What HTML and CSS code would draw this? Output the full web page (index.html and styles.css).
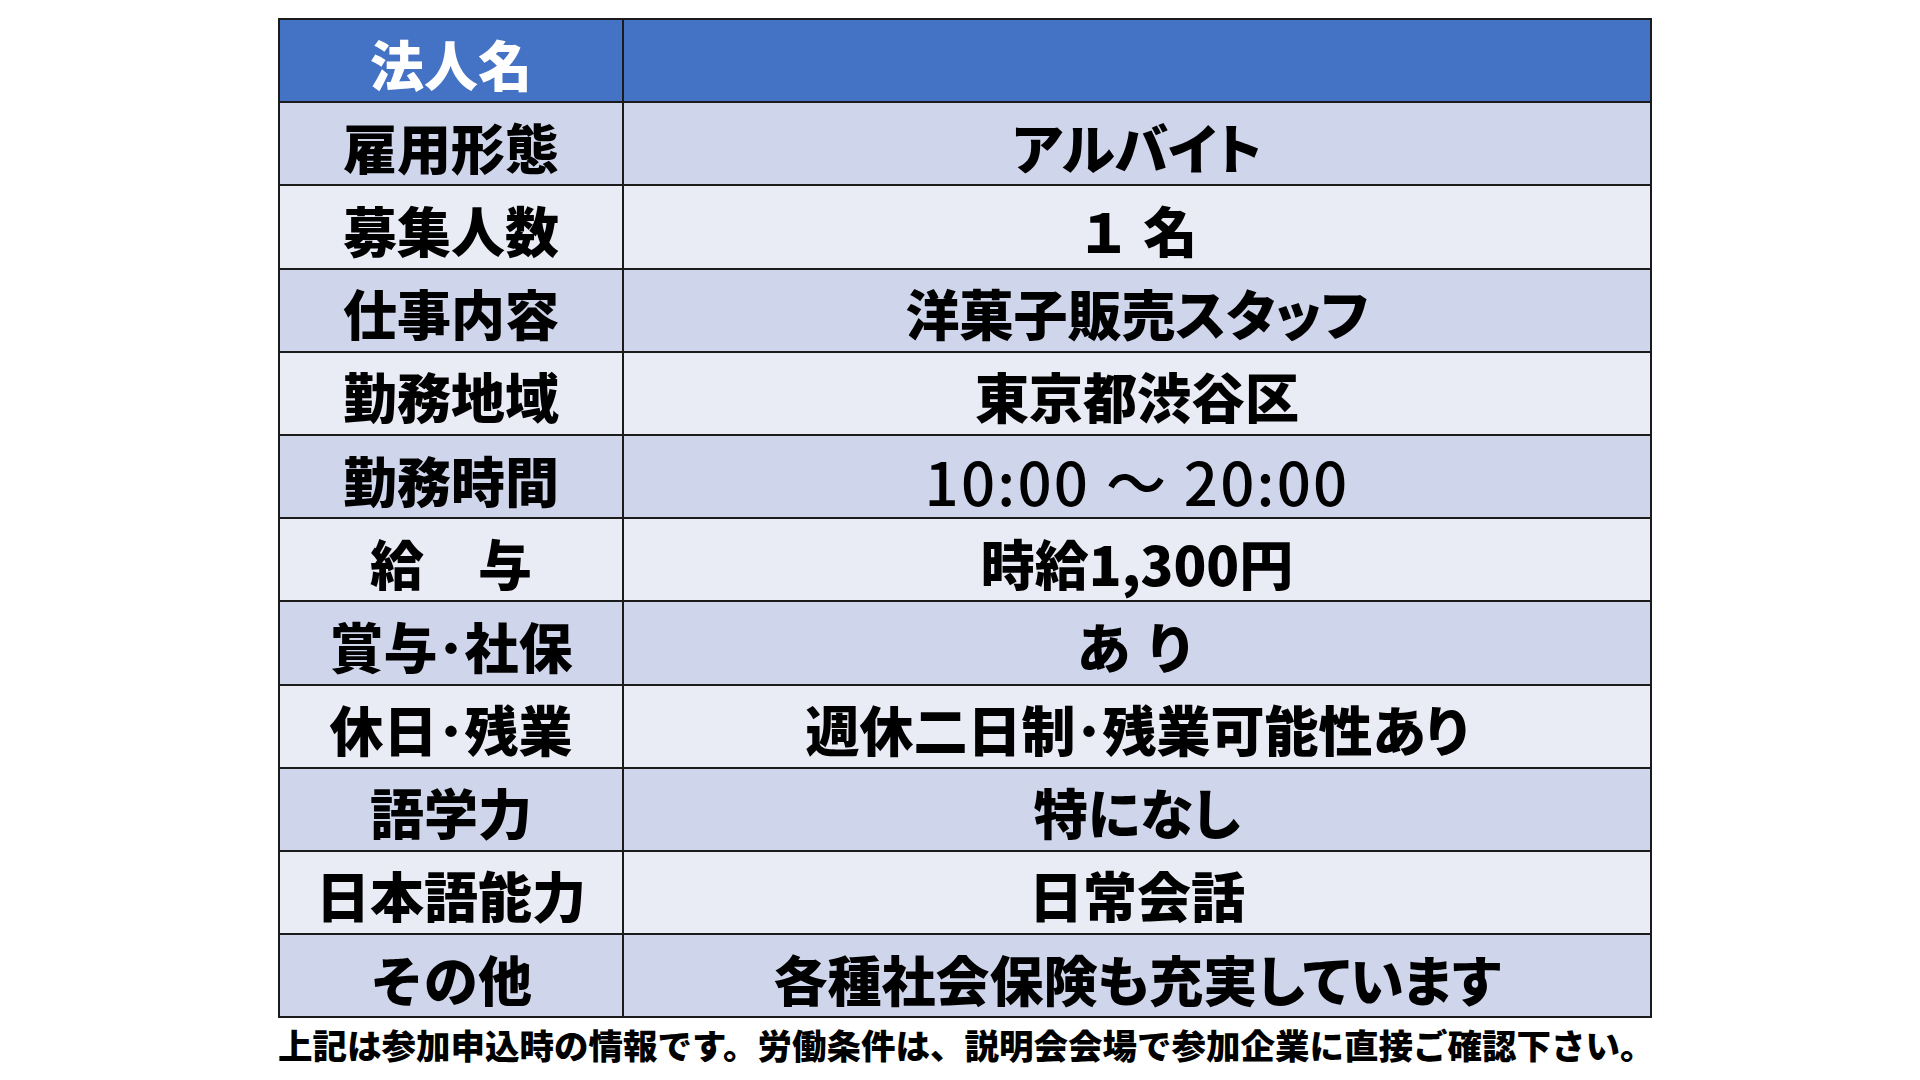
FILE: index.html
```html
<!DOCTYPE html>
<html lang="ja">
<head>
<meta charset="utf-8">
<title>求人情報</title>
<link rel="stylesheet" href="styles.css">
</head>
<body>
<main class="page">
  <table class="job">
    <colgroup><col class="c-label"><col class="c-value"></colgroup>
    <tr class="head"><th>法人名</th><td></td></tr>
    <tr class="odd"><th>雇用形態</th><td class="kana">アルバイト</td></tr>
    <tr class="even"><th>募集人数</th><td>１ 名</td></tr>
    <tr class="odd"><th>仕事内容</th><td class="kana">洋菓子販売スタッフ</td></tr>
    <tr class="even"><th>勤務地域</th><td>東京都渋谷区</td></tr>
    <tr class="odd"><th>勤務時間</th><td class="time">10:00 ～ 20:00</td></tr>
    <tr class="even"><th>給　与</th><td>時給1,300円</td></tr>
    <tr class="odd"><th>賞与･社保</th><td>あ り</td></tr>
    <tr class="even"><th>休日･残業</th><td class="kana">週休二日制･残業可能性あり</td></tr>
    <tr class="odd"><th>語学力</th><td class="kana">特になし</td></tr>
    <tr class="even"><th>日本語能力</th><td>日常会話</td></tr>
    <tr class="odd"><th>その他</th><td class="kana">各種社会保険も充実しています</td></tr>
  </table>
  <p class="note">上記は参加申込時の情報です。労働条件は、説明会会場で参加企業に直接ご確認下さい。</p>
</main>
</body>
</html>
```

FILE: styles.css
```css
html, body {
  margin: 0;
  padding: 0;
  background: #ffffff;
}

body {
  font-family: "Noto Sans CJK JP", "Noto Sans", sans-serif;
  color: #000000;
}

.page {
  padding: 18px 0 0 278px;
}

.job {
  border-collapse: collapse;
  width: 1374px;
  table-layout: fixed;
}

.c-label { width: 344px; }

.job th,
.job td {
  height: 83.2px;
  padding: 6px 0 0 0;
  border: 2px solid #1b1b1b;
  text-align: center;
  vertical-align: middle;
  font-size: 54px;
  font-weight: 900;
  line-height: 1;
  white-space: nowrap;
  box-sizing: border-box;
}

.head th,
.head td {
  background: #4472c4;
  color: #ffffff;
}

.odd th,
.odd td { background: #cfd5ea; }

.even th,
.even td { background: #e9ebf5; }

.job td.kana {
  font-feature-settings: "palt" 1;
}

.job td.time {
  font-weight: 500;
  font-size: 60px;
  letter-spacing: 2.2px;
}

.note {
  margin: 6px 0 0 0;
  font-size: 34.5px;
  font-weight: 900;
  line-height: 1.2;
  white-space: nowrap;
}
```
